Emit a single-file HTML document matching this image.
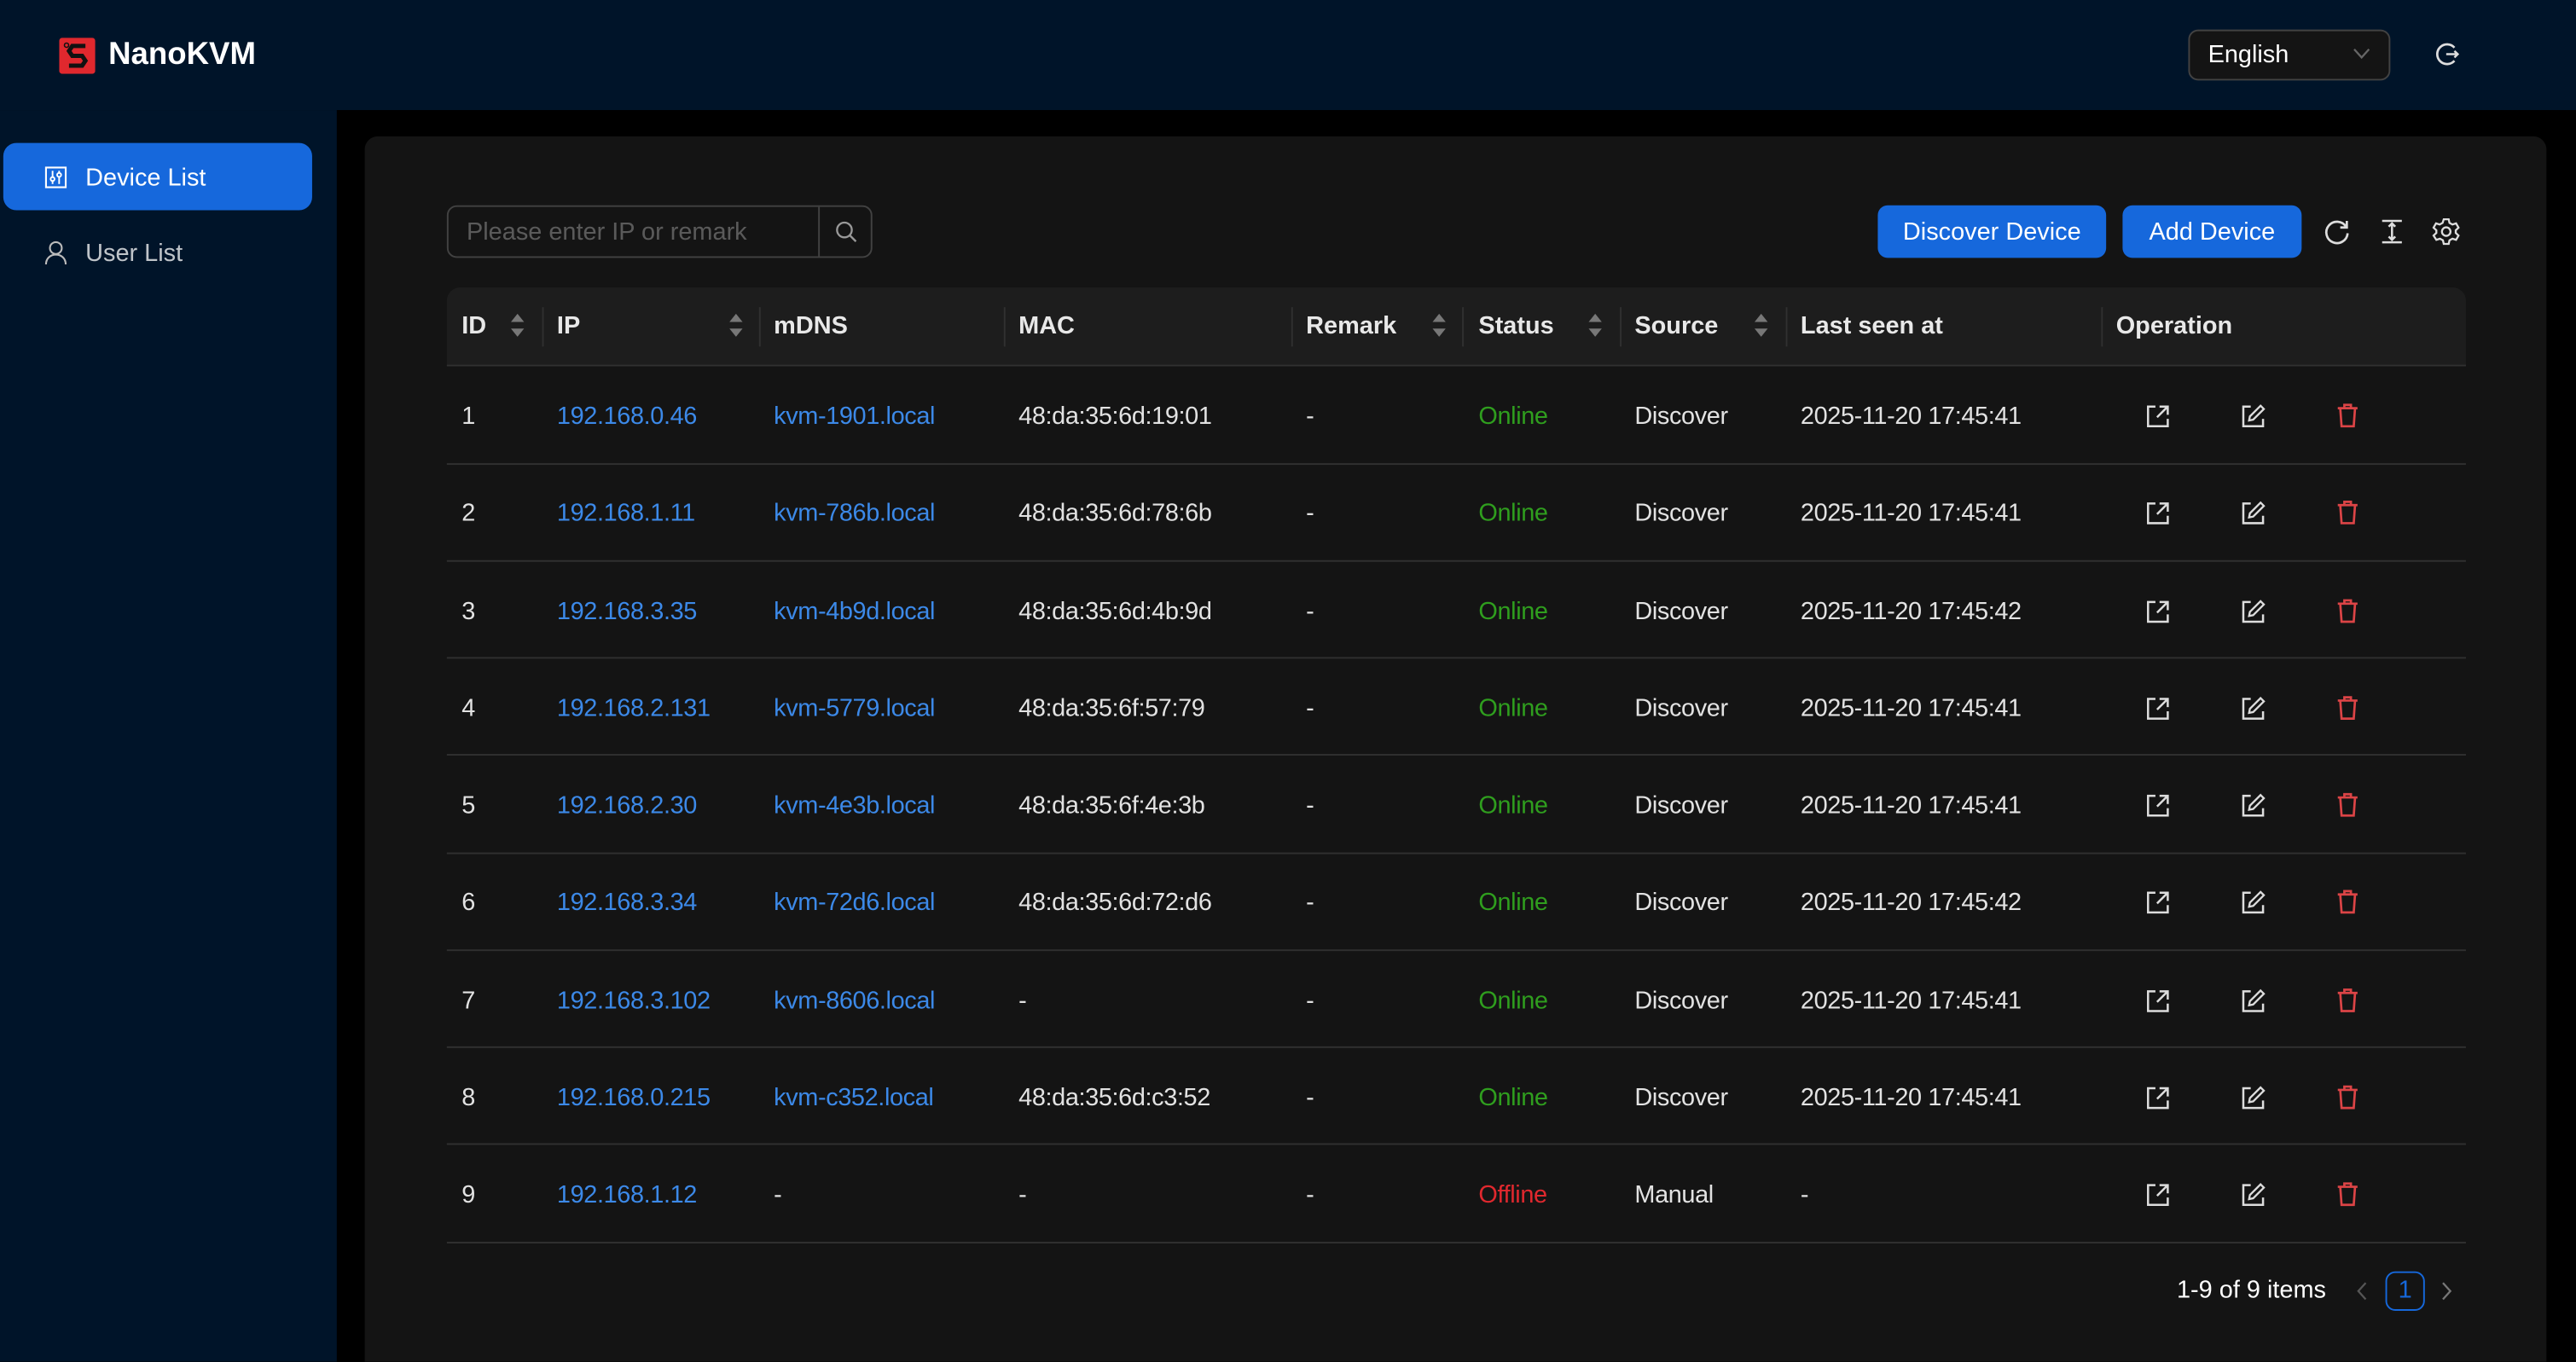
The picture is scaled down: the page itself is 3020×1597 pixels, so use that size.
<!DOCTYPE html>
<html><head><meta charset="utf-8">
<style>
*{box-sizing:border-box;margin:0;padding:0}
html,body{width:3020px;height:1596px;overflow:hidden;background:#000;font-family:"Liberation Sans",sans-serif}
#w{position:absolute;left:0;top:0;width:1568px;height:829px;overflow:hidden;transform:scale(1.92602);transform-origin:0 0;background:#000;color:rgba(255,255,255,.88);font-size:15px}
.a{position:absolute}
.hdr{left:0;top:0;width:1568px;height:67px;background:#001429}
.side{left:0;top:67px;width:205px;height:770px;background:#001429}
.card{left:222px;top:83px;width:1328px;height:760px;background:#141414;border-radius:8px}
.btn{background:#1668dc;color:#fff;border-radius:6px;height:32px;line-height:32px;text-align:center;font-size:15px}
.th{top:175px;height:48px;line-height:48px;font-weight:bold;color:rgba(255,255,255,.9)}
.sep{top:187px;width:1px;height:24px;background:#303030}
.sort{width:8px;height:14px;top:191px}
.cell{line-height:59px;height:59px;letter-spacing:-0.2px}
.link{color:#3c89e8}
.on{color:#2f9e1e}
.off{color:#e0282e}
.line{left:272px;width:1229px;height:1px;background:#303030}
</style></head><body><div id="w">
<div class="a hdr"></div>
<div class="a side"></div>
<svg class="a" style="left:36px;top:23px" width="22" height="22" viewBox="0 0 22 22"><rect width="22" height="22" rx="2" fill="#e0282e"/><path d="M16 5H8L6 8l2 3h6l2 3-2 3H6" stroke="#111" stroke-width="2.6" fill="none"/><circle cx="4.5" cy="4.5" r="1.3" fill="none" stroke="#111" stroke-width="0.8"/></svg>
<div class="a" style="left:66px;top:23px;font-size:19px;font-weight:bold;color:#fff;line-height:22px">NanoKVM</div>
<div class="a" style="left:1332px;top:18px;width:123px;height:31px;background:#141414;border:1px solid #424242;border-radius:6px"></div>
<div class="a" style="left:1344px;top:18px;line-height:31px;color:#fff">English</div>
<svg class="a" style="left:1432px;top:28px" width="11" height="10"><path d="M1 2l4.5 5L10 2" stroke="#666" fill="none" stroke-width="1.2"/></svg>
<svg class="a" style="left:1482px;top:25px" width="16" height="16" viewBox="0 0 16 16"><path d="M12 4A6 6 0 1 0 12 12" stroke="#ddd" stroke-width="1.4" fill="none"/><path d="M7 8h7M12 6l2 2-2 2" stroke="#ddd" stroke-width="1.3" fill="none"/></svg>
<div class="a" style="left:2px;top:87px;width:188px;height:41px;background:#1668dc;border-radius:8px"></div>
<svg class="a" style="left:27px;top:101px" width="14" height="14" viewBox="0 0 14 14"><rect x="1" y="1" width="12" height="12" fill="none" stroke="#fff" stroke-width="1.1"/><path d="M5 3v8M9 3v8" stroke="#fff"/><circle cx="5" cy="8" r="1.2" fill="#1668dc" stroke="#fff"/><circle cx="9" cy="5.5" r="1.2" fill="#1668dc" stroke="#fff"/></svg>
<div class="a" style="left:52px;top:88px;line-height:41px;color:#fff">Device List</div>
<svg class="a" style="left:27px;top:146px" width="14" height="15" viewBox="0 0 14 15"><circle cx="7" cy="5" r="3.6" fill="none" stroke="#bbb" stroke-width="1.1"/><path d="M1 15c0-4 3-6 6-6s6 2 6 6" fill="none" stroke="#bbb" stroke-width="1.1"/></svg>
<div class="a" style="left:52px;top:134px;line-height:41px;color:rgba(255,255,255,.75)">User List</div>
<div class="a card"></div>
<div class="a" style="left:272px;top:125px;width:259px;height:32px;border:1px solid #424242;border-radius:6px;background:#141414"></div>
<div class="a" style="left:498px;top:126px;width:1px;height:30px;background:#424242"></div>
<div class="a" style="left:284px;top:126px;line-height:32px;color:rgba(255,255,255,.3)">Please enter IP or remark</div>
<svg class="a" style="left:508px;top:134px" width="14" height="14" viewBox="0 0 14 14"><circle cx="6" cy="6" r="4.5" fill="none" stroke="#999" stroke-width="1.2"/><path d="M9.3 9.3L13 13" stroke="#999" stroke-width="1.2"/></svg>
<div class="a btn" style="left:1143px;top:125px;width:139px;line-height:33px">Discover Device</div>
<div class="a btn" style="left:1292px;top:125px;width:109px;line-height:33px">Add Device</div>
<svg class="a" style="left:1414px;top:133px" width="17" height="17" viewBox="0 0 17 17"><path d="M14 5A6.5 6.5 0 1 0 15 9" stroke="#ddd" stroke-width="1.4" fill="none"/><path d="M14.5 1.5V5.5H10.5" stroke="#ddd" stroke-width="1.4" fill="none"/></svg>
<svg class="a" style="left:1448px;top:133px" width="16" height="16" viewBox="0 0 16 16"><path d="M2 1.5h12M2 14.5h12M8 3v10M6 5l2-2 2 2M6 11l2 2 2-2" stroke="#ddd" stroke-width="1.3" fill="none"/></svg>
<svg class="a" style="left:1480px;top:132px" width="18" height="18" viewBox="0 0 18 18"><path d="M7.5 1.5h3l.5 2.2 1.8 1 2.2-.7 1.5 2.6-1.7 1.6v1.6l1.7 1.6-1.5 2.6-2.2-.7-1.8 1-.5 2.2h-3l-.5-2.2-1.8-1-2.2.7L1.3 11.4 3 9.8V8.2L1.3 6.6 2.8 4l2.2.7 1.8-1z" fill="none" stroke="#ddd" stroke-width="1.2"/><circle cx="9" cy="9" r="2.6" fill="none" stroke="#ddd" stroke-width="1.2"/></svg>
<div class="a" style="left:272px;top:175px;width:1229px;height:48px;background:#1d1d1d;border-radius:8px 8px 0 0"></div>
<div class="a line" style="top:222px"></div>
<div class="a th" style="left:281px">ID</div>
<div class="a th" style="left:339px">IP</div>
<div class="a th" style="left:471px">mDNS</div>
<div class="a th" style="left:620px">MAC</div>
<div class="a th" style="left:795px">Remark</div>
<div class="a th" style="left:900px">Status</div>
<div class="a th" style="left:995px">Source</div>
<div class="a th" style="left:1096px">Last seen at</div>
<div class="a th" style="left:1288px">Operation</div>
<div class="a sep" style="left:330px"></div><div class="a sep" style="left:462px"></div><div class="a sep" style="left:611px"></div><div class="a sep" style="left:786px"></div><div class="a sep" style="left:890px"></div><div class="a sep" style="left:986px"></div><div class="a sep" style="left:1087px"></div><div class="a sep" style="left:1279px"></div>
<svg class="a sort" style="left:311px" viewBox="0 0 8 14"><path d="M4 0l4 5H0zM4 14l4-5H0z" fill="#777"/></svg>
<svg class="a sort" style="left:444px" viewBox="0 0 8 14"><path d="M4 0l4 5H0zM4 14l4-5H0z" fill="#777"/></svg>
<svg class="a sort" style="left:872px" viewBox="0 0 8 14"><path d="M4 0l4 5H0zM4 14l4-5H0z" fill="#777"/></svg>
<svg class="a sort" style="left:967px" viewBox="0 0 8 14"><path d="M4 0l4 5H0zM4 14l4-5H0z" fill="#777"/></svg>
<svg class="a sort" style="left:1068px" viewBox="0 0 8 14"><path d="M4 0l4 5H0zM4 14l4-5H0z" fill="#777"/></svg>
<div id="rows"></div>
<div class="a" style="left:1325px;top:774px;line-height:23px;color:#fff">1-9 of 9 items</div>
<svg class="a" style="left:1434px;top:780px" width="8" height="12"><path d="M6 1L1.5 6 6 11" stroke="#555" fill="none" stroke-width="1.2"/></svg>
<div class="a" style="left:1452px;top:774px;width:24px;height:24px;border:1px solid #1668dc;border-radius:6px;color:#1668dc;text-align:center;line-height:22px">1</div>
<svg class="a" style="left:1485px;top:780px" width="8" height="12"><path d="M2 1l4.5 5L2 11" stroke="#777" fill="none" stroke-width="1.2"/></svg>
<script>
var d=[["1","192.168.0.46","kvm-1901.local","48:da:35:6d:19:01","Online","Discover","2025-11-20 17:45:41"],
["2","192.168.1.11","kvm-786b.local","48:da:35:6d:78:6b","Online","Discover","2025-11-20 17:45:41"],
["3","192.168.3.35","kvm-4b9d.local","48:da:35:6d:4b:9d","Online","Discover","2025-11-20 17:45:42"],
["4","192.168.2.131","kvm-5779.local","48:da:35:6f:57:79","Online","Discover","2025-11-20 17:45:41"],
["5","192.168.2.30","kvm-4e3b.local","48:da:35:6f:4e:3b","Online","Discover","2025-11-20 17:45:41"],
["6","192.168.3.34","kvm-72d6.local","48:da:35:6d:72:d6","Online","Discover","2025-11-20 17:45:42"],
["7","192.168.3.102","kvm-8606.local","-","Online","Discover","2025-11-20 17:45:41"],
["8","192.168.0.215","kvm-c352.local","48:da:35:6d:c3:52","Online","Discover","2025-11-20 17:45:41"],
["9","192.168.1.12","-","-","Offline","Manual","-"]];
var h="";
d.forEach(function(r,i){var t=223+i*59.25;
function c(x,s,cl){h+='<div class="a cell '+(cl||'')+'" style="left:'+x+'px;top:'+(t+1)+'px">'+s+'</div>';}
c(281,r[0]);c(339,r[1],'link');c(471,r[2],r[2]=='-'?'':'link');c(620,r[3]);c(795,'-');c(900,r[4],r[4]=='Online'?'on':'off');c(995,r[5]);c(1096,r[6]);
var y=t+23;
h+='<svg class="a" style="left:1306px;top:'+y+'px" width="15" height="15" viewBox="0 0 15 15"><path d="M6 1.5H1.5v12h12V9M8.5 1.5h5v5M13.5 1.5L7 8" stroke="#ddd" stroke-width="1.3" fill="none"/></svg>';
h+='<svg class="a" style="left:1364px;top:'+y+'px" width="15" height="15" viewBox="0 0 15 15"><path d="M6 1.5H1.5v12h12V9" stroke="#ddd" stroke-width="1.3" fill="none"/><path d="M12 1l2 2-6.5 6.5L5 10l.5-2.5z" stroke="#ddd" stroke-width="1.2" fill="none"/></svg>';
h+='<svg class="a" style="left:1422px;top:'+(y-1)+'px" width="14" height="16" viewBox="0 0 14 16"><path d="M1 3.5h12M5 3.5V1.5h4v2M2.5 3.5l.8 11h7.4l.8-11" stroke="#dc4446" stroke-width="1.4" fill="none"/></svg>';
h+='<div class="a line" style="top:'+(t+58.5)+'px"></div>';});
document.getElementById("rows").outerHTML=h;
</script>
</div></body></html>
